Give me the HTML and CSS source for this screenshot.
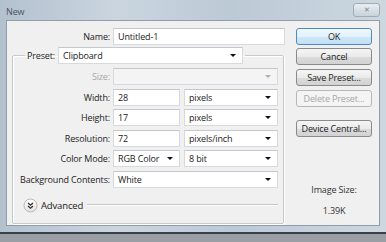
FILE: index.html
```html
<html>
<head>
    <title>New</title>
    <link rel="stylesheet" href="styles.css">
</head>
<body>
  <div class="window">
    <div class="titlebar">
      <span class="title">New</span>
      <span class="close">&#x2715;</span>
    </div>

    <div class="client">
      <div class="form">
        <div class="row name-row">
          <label>Name:</label>
          <div class="field w-name">Untitled-1</div>
        </div>

        <fieldset class="group">
          <legend>
            <label>Preset:</label>
            <div class="field select w-preset">Clipboard<span class="arrow"></span></div>
          </legend>

          <div class="row">
            <label class="disabled">Size:</label>
            <div class="field select disabled w-full"><span class="arrow"></span></div>
          </div>
          <div class="row">
            <label>Width:</label>
            <div class="field w-num">28</div>
            <div class="field select w-unit">pixels<span class="arrow"></span></div>
          </div>
          <div class="row">
            <label>Height:</label>
            <div class="field w-num">17</div>
            <div class="field select w-unit">pixels<span class="arrow"></span></div>
          </div>
          <div class="row">
            <label>Resolution:</label>
            <div class="field w-num">72</div>
            <div class="field select w-unit">pixels/inch<span class="arrow"></span></div>
          </div>
          <div class="row">
            <label>Color Mode:</label>
            <div class="field select w-num">RGB Color<span class="arrow"></span></div>
            <div class="field select w-unit">8 bit<span class="arrow"></span></div>
          </div>
          <div class="row">
            <label>Background Contents:</label>
            <div class="field select w-full">White<span class="arrow"></span></div>
          </div>

          <div class="advanced">
            <svg class="chevron" width="15" height="15" viewBox="0 0 15 15">
              <defs>
                <linearGradient id="cg" x1="0" y1="0" x2="0" y2="1">
                  <stop offset="0" stop-color="#ffffff"/>
                  <stop offset="1" stop-color="#e2e2e2"/>
                </linearGradient>
              </defs>
              <circle cx="7.5" cy="7.5" r="6.5" fill="url(#cg)" stroke="#b9b9b9"/>
              <polyline points="5,5 7.5,7.2 10,5" fill="none" stroke="#333" stroke-width="1.3"/>
              <polyline points="5,8 7.5,10.2 10,8" fill="none" stroke="#333" stroke-width="1.3"/>
            </svg>
            <span>Advanced</span>
            <div class="line"></div>
          </div>
        </fieldset>
      </div>

      <div class="buttons">
        <div class="btn default">OK</div>
        <div class="btn">Cancel</div>
        <div class="btn">Save Preset...</div>
        <div class="btn disabled">Delete Preset...</div>
        <div class="btn central">Device Central...</div>

        <div class="image-size">
          <div>Image Size:</div>
          <div class="size-value">1.39K</div>
        </div>
      </div>
    </div>
  </div>
</body>
</html>
```

FILE: styles.css
```css
    body {
        margin: 0;
        width: 386px;
        height: 242px;
        overflow: hidden;
        background: #9a9fa5;
        font-family: "Open Sans", sans-serif;
        font-size: 9px;
        letter-spacing: -0.15px;
        color: #222;
    }

    .window {
        height: 234px;
        box-sizing: border-box;
        padding: 0 6px 6px 6px;
        background: linear-gradient(90deg, #b3c1cf, #cad5df 30%, #bccad6 60%, #ccd7e0);
        border-bottom: 2px solid #3a4047;
        display: flex;
        flex-direction: column;
    }

    .titlebar {
        height: 20px;
        display: flex;
        align-items: center;
        justify-content: space-between;
    }

    .title {
        color: #4a545e;
        margin-top: 3px;
    }

    .close {
        width: 25px;
        height: 12px;
        border: 1px solid #a0abb6;
        border-radius: 3px;
        background: linear-gradient(#e8edf1, #c8d2db);
        font-size: 7px;
        line-height: 12px;
        text-align: center;
        color: #7a848e;
    }

    .client {
        flex: 1;
        display: flex;
        background: #f0f0f0;
        border: 1px solid #8f9caa;
        padding: 7px 7px 0 5px;
    }

    .form {
        width: 273px;
    }

    .row {
        display: flex;
        align-items: center;
        height: 17px;
        margin-top: 3.5px;
    }

    .row label {
        width: 97px;
        margin-right: 3px;
        text-align: right;
        white-space: nowrap;
    }

    .name-row {
        margin-top: 0;
    }

    .name-row label {
        width: 98px;
    }

    label.disabled {
        color: #a8a8a8;
    }

    .field {
        position: relative;
        height: 17px;
        box-sizing: border-box;
        line-height: 15px;
        padding-left: 4px;
        background: #fff;
        border: 1px solid #d6d9dd;
        border-top-color: #c4c7cb;
        white-space: nowrap;
    }

    .field.disabled {
        background: #f4f4f4;
    }

    .w-name { width: 172px; }
    .w-preset { width: 185px; }
    .w-full { width: 165px; }
    .w-num { width: 67px; margin-right: 4px; }
    .w-unit { width: 94px; }

    .arrow {
        position: absolute;
        right: 6px;
        top: 6px;
        border-left: 3px solid transparent;
        border-right: 3px solid transparent;
        border-top: 3px solid #111;
    }

    .disabled .arrow {
        border-top-color: #b0b0b0;
    }

    .group {
        margin: 2px 0 0 0;
        padding: 0 5px 9px 0;
        width: 272px;
        box-sizing: border-box;
        border: 1px solid #c6c8ca;
        border-radius: 2px;
        box-shadow: inset 1px 1px 0 #fff, 1px 1px 0 #fff;
    }

    .group legend {
        margin-left: 12px;
        padding: 0 2px;
        display: flex;
        align-items: center;
    }

    .group legend label {
        margin-right: 3px;
    }

    .group .row:first-of-type {
        margin-top: 4px;
    }

    .advanced {
        display: flex;
        align-items: center;
        height: 17px;
        margin-top: 9px;
        padding-left: 10px;
    }

    .advanced span {
        margin-left: 3px;
        font-size: 9.5px;
    }

    .advanced .line {
        flex: 1;
        height: 0;
        margin-left: 4px;
        border-top: 1px solid #c6c8ca;
        border-bottom: 1px solid #fff;
    }

    .buttons {
        margin-left: 11px;
        width: 76px;
        display: flex;
        flex-direction: column;
    }

    .btn {
        height: 17px;
        box-sizing: border-box;
        line-height: 15px;
        text-align: center;
        border: 1px solid #8a8a8a;
        border-radius: 3px;
        background: linear-gradient(#f6f6f6 0%, #eaeaea 50%, #dcdcdc 51%, #d2d2d2 100%);
        margin-bottom: 4px;
    }

    .btn.default {
        border-color: #4b8cc0;
        background: linear-gradient(#f1f8fd 0%, #e2f1fb 50%, #cfe7f7 51%, #c2e0f5 100%);
        margin-bottom: 3px;
    }

    .btn.disabled {
        border-color: #b5b8bb;
        background: #f4f4f4;
        color: #a6a6a6;
    }

    .btn.central {
        margin-top: 9px;
    }

    .image-size {
        margin-top: 42px;
        text-align: center;
        color: #333;
    }

    .size-value {
        margin-top: 8px;
    }
```
